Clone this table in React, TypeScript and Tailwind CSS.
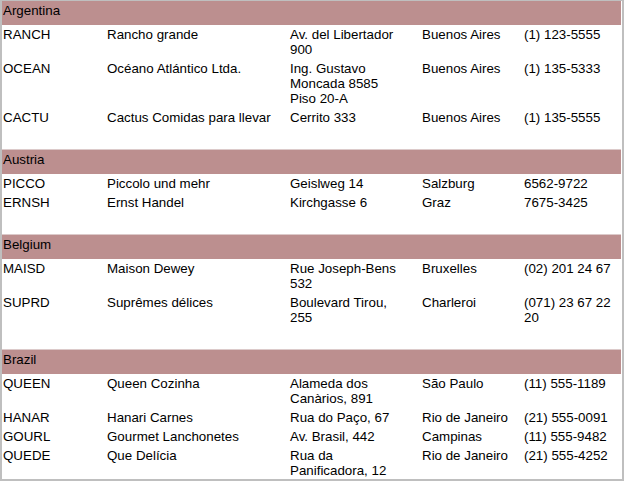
const groups = [
  {
    country: "Argentina",
    rows: [
      ["RANCH", "Rancho grande", "Av. del Libertador 900", "Buenos Aires", "(1) 123-5555"],
      ["OCEAN", "Océano Atlántico Ltda.", "Ing. Gustavo Moncada 8585 Piso 20-A", "Buenos Aires", "(1) 135-5333"],
      ["CACTU", "Cactus Comidas para llevar", "Cerrito 333", "Buenos Aires", "(1) 135-5555"],
    ],
  },
  {
    country: "Austria",
    rows: [
      ["PICCO", "Piccolo und mehr", "Geislweg 14", "Salzburg", "6562-9722"],
      ["ERNSH", "Ernst Handel", "Kirchgasse 6", "Graz", "7675-3425"],
    ],
  },
  {
    country: "Belgium",
    rows: [
      ["MAISD", "Maison Dewey", "Rue Joseph-Bens 532", "Bruxelles", "(02) 201 24 67"],
      ["SUPRD", "Suprêmes délices", "Boulevard Tirou, 255", "Charleroi", "(071) 23 67 22 20"],
    ],
  },
  {
    country: "Brazil",
    rows: [
      ["QUEEN", "Queen Cozinha", "Alameda dos Canàrios, 891", "São Paulo", "(11) 555-1189"],
      ["HANAR", "Hanari Carnes", "Rua do Paço, 67", "Rio de Janeiro", "(21) 555-0091"],
      ["GOURL", "Gourmet Lanchonetes", "Av. Brasil, 442", "Campinas", "(11) 555-9482"],
      ["QUEDE", "Que Delícia", "Rua da Panificadora, 12", "Rio de Janeiro", "(21) 555-4252"],
    ],
  },
];

const CustomerRow = ({ row }: { row: string[] }) => {
  return (
    <div className="grid grid-cols-[104px_183px_132px_102px_1fr] pl-[1px] py-[2px]">
      <div>{row[0]}</div>
      <div>{row[1]}</div>
      <div className="pr-5">{row[2]}</div>
      <div>{row[3]}</div>
      <div>{row[4]}</div>
    </div>
  );
};

const App = () => {
  return (
    <div
      className="w-[624px] h-[481px] overflow-hidden bg-white text-black border-t border-l-2 border-r-2 border-b-2 border-[#bfbfbf] pr-[1px] text-[13.33px] leading-[15px]"
      style={{ fontFamily: '"Liberation Sans", Arial, sans-serif' }}
    >
      {groups.map((group, i) => (
        <div key={group.country}>
          {i > 0 && <div className="h-[23px] border-b border-[#dccaca]" />}
          <div className="h-6 bg-[#bc8f8f] pl-[1px] pt-[2px]">{group.country}</div>
          {group.rows.map((row) => (
            <CustomerRow key={row[0]} row={row} />
          ))}
        </div>
      ))}
    </div>
  );
};

export default App;
